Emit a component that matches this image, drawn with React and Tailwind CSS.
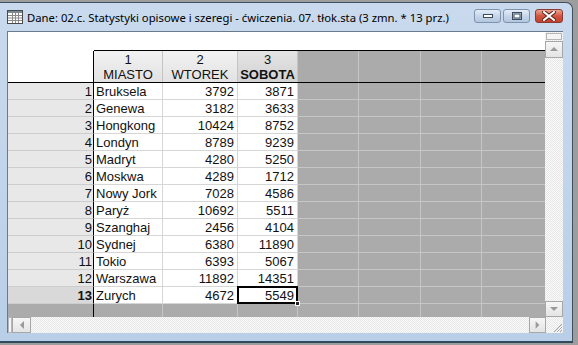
import React from 'react';

const rows = [
  [1, 'Bruksela', 3792, 3871],
  [2, 'Genewa', 3182, 3633],
  [3, 'Hongkong', 10424, 8752],
  [4, 'Londyn', 8789, 9239],
  [5, 'Madryt', 4280, 5250],
  [6, 'Moskwa', 4289, 1712],
  [7, 'Nowy Jork', 7028, 4586],
  [8, 'Paryż', 10692, 5511],
  [9, 'Szanghaj', 2456, 4104],
  [10, 'Sydnej', 6380, 11890],
  [11, 'Tokio', 6393, 5067],
  [12, 'Warszawa', 11892, 14351],
  [13, 'Zurych', 4672, 5549],
];

const dither = 'bg-[repeating-conic-gradient(#e6e6e6_0_25%,#fbfbfb_0_50%)] bg-[length:2px_2px]';

// puste szare kolumny po prawej
const GrayCells = ({ head }) => (
  <>
    <div className={`w-[61px] shrink-0 border-r border-[#c6c6c6] ${head ? '' : 'border-b'}`} />
    <div className={`w-[62px] shrink-0 border-r border-[#c6c6c6] ${head ? '' : 'border-b'}`} />
    <div className={`w-[61px] shrink-0 border-r border-[#c6c6c6] ${head ? '' : 'border-b'}`} />
    <div className={`flex-1 border-[#c6c6c6] ${head ? '' : 'border-b'}`} />
  </>
);

const SheetIcon = () => (
  <svg width="16" height="14" viewBox="0 0 16 14">
    <rect x="0.5" y="0.5" width="15" height="13" fill="#fff" stroke="#4a4a4a" />
    <rect x="1" y="1" width="14" height="2" fill="#7b8794" />
    <path d="M1 5.5h14M1 8h14M1 10.5h14M5.5 3v10M8.5 3v10M11.5 3v10" stroke="#8a8a8a" strokeWidth="1" />
  </svg>
);

const TitleButton = ({ kind }) => {
  const isClose = kind === 'close';
  return (
    <div
      className={`h-[14px] flex items-center justify-center rounded-[3px] border ${
        isClose
          ? 'w-[28px] border-[#8a3a33] bg-gradient-to-b from-[#e8a493] via-[#d2553f] to-[#c0432f]'
          : 'w-[27px] border-[#7d93ad] bg-gradient-to-b from-[#e4edf7] via-[#c6d6e9] to-[#b3c6dd]'
      }`}
    >
      {kind === 'min' && (
        <svg width="10" height="6" viewBox="0 0 10 6">
          <rect x="0.5" y="1.5" width="9" height="3" fill="#fff" stroke="#3b4c60" />
        </svg>
      )}
      {kind === 'max' && (
        <svg width="10" height="8" viewBox="0 0 10 8">
          <rect x="0.5" y="0.5" width="9" height="7" fill="none" stroke="#3b4c60" />
          <rect x="2" y="2" width="6" height="4" fill="#fff" stroke="#3b4c60" strokeWidth="1" />
        </svg>
      )}
      {isClose && (
        <svg width="14" height="10" viewBox="0 0 14 10">
          <path d="M2 1l10 8M12 1L2 9" stroke="#5a231c" strokeWidth="4" strokeLinecap="square" />
          <path d="M2 1l10 8M12 1L2 9" stroke="#fff" strokeWidth="2" strokeLinecap="square" />
        </svg>
      )}
    </div>
  );
};

const ScrollBtn = ({ dir, className = '' }) => {
  const paths = {
    up: 'M4 9h8L8 5z',
    down: 'M4 6h8l-4 4z',
    left: 'M10 4v8L6 8z',
    right: 'M6 4v8l4-4z',
  };
  return (
    <div className={`flex items-center justify-center border border-[#a7a7a7] bg-gradient-to-b from-[#f6f6f6] to-[#e4e4e4] ${className}`}>
      <svg width="16" height="16" viewBox="0 0 16 16">
        <path d={paths[dir]} fill="#9a9a9a" />
      </svg>
    </div>
  );
};

export default function App() {
  return (
    <div className="w-[578px] h-[345px] bg-[#9d9d9d] overflow-hidden" style={{ fontFamily: '"Liberation Sans", Arial, sans-serif' }}>
      <div className="mt-[2px] w-[573px] h-[341px] flex flex-col border border-l-0 border-[#3e4f62] border-b-2 border-b-[#2e4a5c] rounded-tr-[7px] bg-gradient-to-b from-[#c9daee] to-[#b9cfe8]">
        {/* pasek tytułu */}
        <div className="h-[28px] shrink-0 flex items-center pl-[7px] pr-[9px]">
          <SheetIcon />
          <span className="ml-[4px] mt-[2px] text-[11.3px] text-black whitespace-nowrap" style={{ fontFamily: '"Noto Sans", sans-serif' }}>
            Dane: 02.c. Statystyki opisowe i szeregi - ćwiczenia. 07. tłok.sta (3 zmn. * 13 prz.)
          </span>
          <div className="ml-auto flex items-center gap-[2px] mb-[2px]">
            <TitleButton kind="min" />
            <TitleButton kind="max" />
            <div className="w-[1px]" />
            <TitleButton kind="close" />
          </div>
        </div>

        {/* zawartość okna */}
        <div className="ml-[7px] w-[556px] h-[302px] flex flex-col border-t border-l border-[#6b7a8b] bg-white">
          <div className="flex h-[285px]">
            {/* arkusz */}
            <div className="w-[537px] flex flex-col text-[13px] text-[#111] leading-none">
              <div className="flex h-[19px] shrink-0">
                <div className="w-[86px] shrink-0" />
                <div className="flex-1 border-b border-black" />
              </div>
              <div className="flex h-[32px] shrink-0 border-b border-black">
                <div className="w-[86px] shrink-0 border-r border-black bg-white" />
                {[
                  ['1', 'MIASTO', 69, false],
                  ['2', 'WTOREK', 75, false],
                  ['3', 'SOBOTA', 60, true],
                ].map(([n, name, w, active]) => (
                  <div
                    key={n}
                    style={{ width: w }}
                    className={`shrink-0 flex flex-col items-center justify-center gap-[2px] border-r border-[#c4c4c4] ${
                      active ? 'bg-gradient-to-b from-[#e4e4e4] to-[#d2d2d2] font-bold' : 'bg-gradient-to-b from-[#f2f2f2] to-[#e2e2e2]'
                    }`}
                  >
                    <span className="font-normal">{n}</span>
                    <span>{name}</span>
                  </div>
                ))}
                <div className="flex-1 flex bg-[#ababab]">
                  <GrayCells head />
                </div>
              </div>

              {rows.map(([n, city, a, b]) => {
                const last = n === 13;
                return (
                  <div key={n} className="flex h-[17px] shrink-0">
                    <div
                      className={`w-[86px] shrink-0 flex items-center justify-end pr-[1px] border-r border-r-black border-b border-b-[#cdcdcd] ${
                        last ? 'bg-[#d9d9d9] font-bold' : 'bg-[#e8e8e8]'
                      }`}
                    >
                      {n}
                    </div>
                    <div className="w-[69px] shrink-0 flex items-center pl-[2px] border-r border-b border-[#d6d6d6] whitespace-nowrap">{city}</div>
                    <div className="w-[75px] shrink-0 flex items-center justify-end pr-[3px] border-r border-b border-[#d6d6d6]">{a}</div>
                    <div className="w-[60px] shrink-0 relative flex items-center justify-end pr-[3px] border-r border-b border-[#d6d6d6]">
                      {b}
                      {last && (
                        <>
                          <div className="absolute -left-[1px] -top-[1px] w-[61px] h-[18px] border-2 border-black" />
                          <div className="absolute -right-[3px] -bottom-[3px] w-[5px] h-[5px] bg-[#222] border border-white" />
                        </>
                      )}
                    </div>
                    <div className="flex-1 flex bg-[#ababab]">
                      <GrayCells />
                    </div>
                  </div>
                );
              })}

              <div className="flex flex-1 bg-[#ababab]">
                <div className="w-[86px] shrink-0 border-r border-black" />
                <div className="w-[69px] shrink-0 border-r border-[#c6c6c6]" />
                <div className="w-[75px] shrink-0 border-r border-[#c6c6c6]" />
                <div className="w-[60px] shrink-0 border-r border-[#c6c6c6]" />
                <div className="flex-1 flex">
                  <GrayCells head />
                </div>
              </div>
            </div>

            {/* pionowy pasek przewijania */}
            <div className={`w-[18px] flex flex-col ${dither}`}>
              <div className="h-[7px] mx-[1px] mt-[1px] border border-[#b5b5b5] bg-[#f4f4f4]" />
              <ScrollBtn dir="up" className="h-[17px] mt-[1px]" />
              <div className="flex-1" />
              <ScrollBtn dir="down" className="h-[16px]" />
            </div>
          </div>

          {/* poziomy pasek przewijania */}
          <div className={`flex h-[16px] ${dither}`}>
            <div className="w-[4px] border border-[#b5b5b5] bg-[#f4f4f4]" />
            <ScrollBtn dir="left" className="w-[19px]" />
            <div className="flex-1" />
            <ScrollBtn dir="right" className="w-[17px]" />
            <div className="w-[17px] flex items-end justify-end">
              <svg width="12" height="12" viewBox="0 0 12 12">
                <path d="M11 3L3 11M11 6L6 11M11 9L9 11" stroke="#a5a5a5" strokeWidth="1" />
              </svg>
            </div>
          </div>
        </div>
      </div>
    </div>
  );
}
